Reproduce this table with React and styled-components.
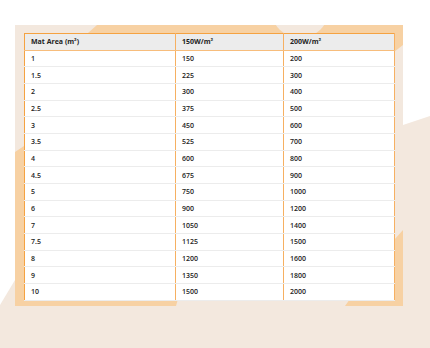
import React from "react"
import styled, { createGlobalStyle } from "styled-components"

const rows = [
  ["1", "150", "200"],
  ["1.5", "225", "300"],
  ["2", "300", "400"],
  ["2.5", "375", "500"],
  ["3", "450", "600"],
  ["3.5", "525", "700"],
  ["4", "600", "800"],
  ["4.5", "675", "900"],
  ["5", "750", "1000"],
  ["6", "900", "1200"],
  ["7", "1050", "1400"],
  ["7.5", "1125", "1500"],
  ["8", "1200", "1600"],
  ["9", "1350", "1800"],
  ["10", "1500", "2000"],
]

const GlobalStyle = createGlobalStyle`
  html, body {
    margin: 0;
    padding: 0;
    background: #fff;
  }
`

// background shapes behind the table
const Decor = () => (
  <DecorSvg viewBox="0 0 430 348" width="430" height="348">
    <defs>
      <clipPath id="frame">
        <rect x="15" y="25" width="388" height="281" />
      </clipPath>
    </defs>
    <g fill="#f3e8de">
      <rect x="15" y="25" width="388" height="281" />
      <rect x="0" y="306" width="430" height="42" />
      <polygon points="403,125 430,116 430,348 403,348" />
      <polygon points="15,280 0,305 0,348 15,348" />
    </g>
    <g fill="#f7d1a3" clipPath="url(#frame)">
      <polygon points="97,25 403,25 403,33 88,33" />
      <polygon points="394,25 403,25 403,45 394,52" />
      <polygon points="403,230 403,306 394,306 394,240" />
      <polygon points="15,152 24,146 24,299 178,299 176,306 15,306" />
      <polygon points="350,299 394,299 394,306 345,306" />
      <circle cx="300" cy="9" r="29" fill="#f3e8de" />
    </g>
  </DecorSvg>
)

const App = () => {
  return (
    <Page>
      <GlobalStyle />
      <Decor />
      <Table>
        <colgroup>
          <col style={{ width: 151 }} />
          <col style={{ width: 108 }} />
          <col style={{ width: 111 }} />
        </colgroup>
        <thead>
          <tr>
            <Th>Mat Area (m²)</Th>
            <Th>150W/m²</Th>
            <Th>200W/m²</Th>
          </tr>
        </thead>
        <tbody>
          {rows.map((row, i) => (
            <tr key={i}>
              {row.map((cell, j) => (
                <Td key={j}>{cell}</Td>
              ))}
            </tr>
          ))}
        </tbody>
      </Table>
    </Page>
  )
}

export default App

const Page = styled.div`
  position: relative;
  width: 430px;
  height: 348px;
  overflow: hidden;
  background: #fff;
  padding: 33px 0 0 24px;
  box-sizing: border-box;
`

const DecorSvg = styled.svg`
  position: absolute;
  top: 0;
  left: 0;
  z-index: 0;
`

const Table = styled.table`
  position: relative;
  z-index: 1;
  width: 370px;
  table-layout: fixed;
  border-collapse: collapse;
  background: #fff;
  border: 1.5px solid #f5a241;
  font-family: "Open Sans", "Liberation Sans", sans-serif;
  font-size: 7px;
  font-weight: 600;
  color: #222;
`

const Cell = `
  height: 16.67px;
  padding: 0 0 0 6px;
  box-sizing: border-box;
  text-align: left;
  vertical-align: middle;
  border-bottom: 1px solid #ececec;
  border-right: 1px solid #f6b062;
  line-height: 1;
  white-space: nowrap;
`

const Th = styled.th`
  ${Cell}
  background: #ececec;
  border-bottom: 1.5px solid #f7bd7c;
`

const Td = styled.td`
  ${Cell}
`
